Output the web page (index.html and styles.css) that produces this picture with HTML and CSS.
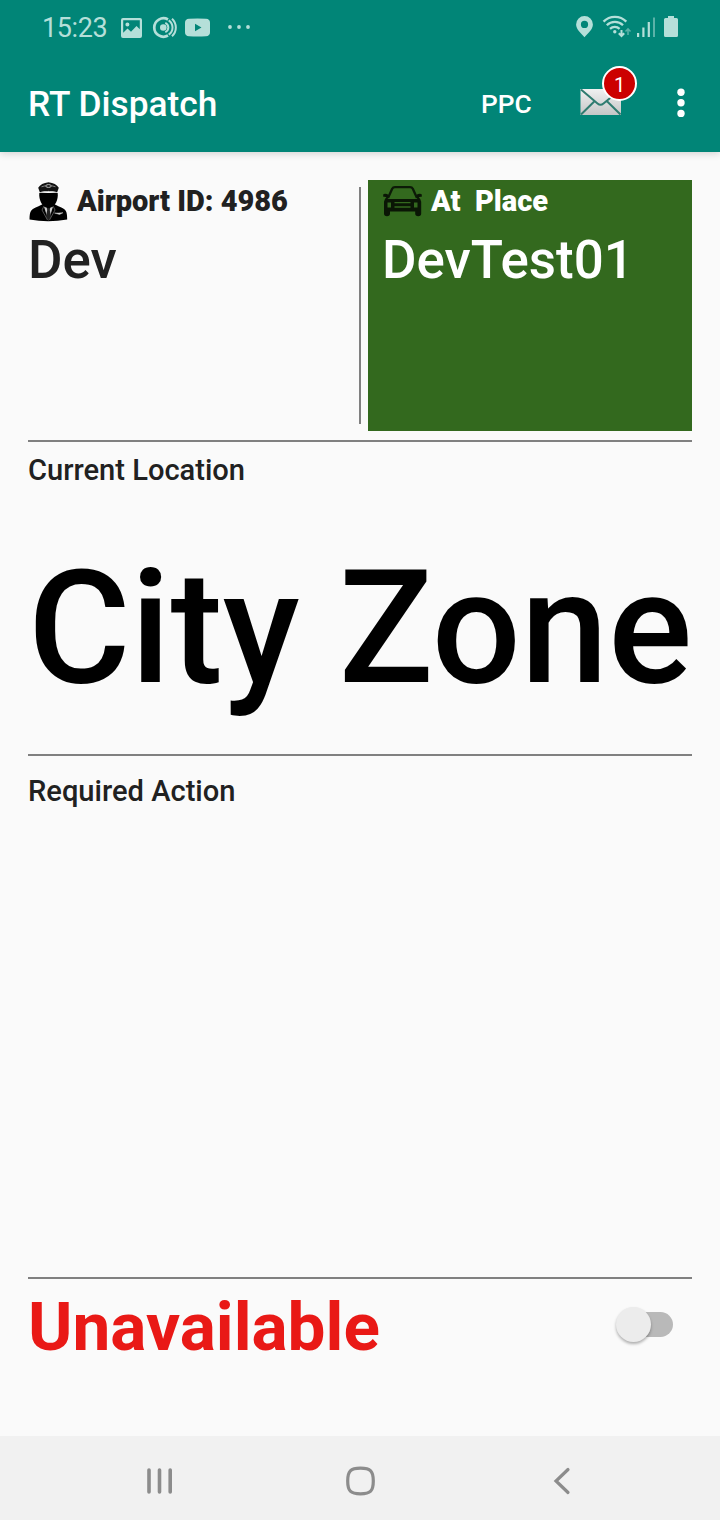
FILE: index.html
```html
<!DOCTYPE html>
<html lang="en">
<head>
<meta charset="utf-8">
<title>RT Dispatch</title>
<link rel="stylesheet" href="styles.css">
</head>
<body>
<div class="screen">
  <header class="header">
    <div class="status">
      <span class="clock">15:23</span>
      <svg class="status-left" width="132" height="24" viewBox="120 15 132 24" fill="#b5dfd9">
        <path fill-rule="evenodd" d="M123 18h17q2 0 2 2v16q0 2-2 2h-17q-2 0-2-2V20q0-2 2-2zm.2 2.200v12.600l4.300-4.300 3.500 3.200 5.500-5.700 3.300 3.300v-9.100zM125.400 24.500a2 2 0 1 0 4 0 2 2 0 1 0-4 0z"/>
        <g fill="none" stroke="#b5dfd9">
          <path d="M168 19.500A9.200 9.200 0 1 0 168 35.500" stroke-width="2.700"/>
          <path d="M165.300 22.900a5 5 0 0 1 0 9.200M168.700 20.300a8.700 8.700 0 0 1 0 14.400M172 18.700a12 12 0 0 1 0 17.600" stroke-width="2"/>
        </g>
        <circle cx="163.300" cy="27.500" r="3.300"/>
        <path fill-rule="evenodd" d="M189 18.800q8.500-.8 17 0 4 .3 4 4v9.400q0 3.700-4 4-8.500.8-17 0-4-.3-4-4v-9.400q0-3.700 4-4zM195 23.800v7.500l6.500-3.700z"/>
        <circle cx="230" cy="27" r="1.900"/><circle cx="239" cy="27" r="1.900"/><circle cx="248" cy="27" r="1.900"/>
      </svg>
      <svg class="status-right" width="104" height="26" viewBox="575 13 104 26" fill="#b5dfd9">
        <path fill-rule="evenodd" d="M584.500 16a8.400 8.400 0 0 1 8.400 8.400c0 5-5 8.600-8.400 12.800-3.400-4.200-8.400-7.800-8.400-12.800a8.400 8.400 0 0 1 8.400-8.400zm0 4.800a3.600 3.600 0 1 0 0 7.200 3.600 3.600 0 1 0 0-7.200z"/>
        <g fill="none" stroke="#b5dfd9" stroke-width="2.300">
          <path d="M603.500 21.600a16 16 0 0 1 22.800 0M606.800 25.200a11.500 11.500 0 0 1 16.200 0M610 28.800a7 7 0 0 1 9.600 0"/>
          <path d="M621.500 30v6M618.800 33.200l2.700 2.800 2.700-2.800" stroke-width="2"/>
          <path d="M628 35v-6M625.500 31.500l2.500-2.700 2.500 2.700" stroke-width="1.500" opacity=".5"/>
        </g>
        <circle cx="614.800" cy="31.700" r="1.700"/>
        <path d="M637 33h2.200v4H637zM642.300 27.500h2.200V37h-2.200zM647.700 22h2.200v15h-2.200z"/>
        <path d="M653 17.500h2V37h-2z" opacity=".5"/>
        <path d="M668 16h6v2h2.500q1.500 0 1.500 1.500v16q0 1.500-1.500 1.500h-11q-1.500 0-1.500-1.500v-16q0-1.500 1.500-1.500h2.500z"/>
      </svg>
    </div>
    <div class="appbar">
      <h1 class="title">RT Dispatch</h1>
      <span class="ppc">PPC</span>
      <div class="mail">
        <svg width="42" height="28" viewBox="0 0 42 28">
          <defs><linearGradient id="paper" x1="0" y1="0" x2="0" y2="1"><stop offset="0" stop-color="#f0f1f1"/><stop offset="1" stop-color="#c4c6c6"/></linearGradient></defs>
          <rect x=".5" y="1" width="40.500" height="26" fill="url(#paper)"/>
          <path d="M1 1.500 17.500 15.500q3 2.500 6 0L40.500 1.500M1 26.500l13.500-13.300M40.500 26.500l-13.500-13.300" fill="none" stroke="#2f7c70" stroke-width="2"/>
        </svg>
        <span class="badge">1</span>
      </div>
      <svg class="more" width="8" height="30" viewBox="0 0 8 30" fill="#fff"><circle cx="4" cy="4.200" r="3.700"/><circle cx="4" cy="14.800" r="3.700"/><circle cx="4" cy="25.400" r="3.700"/></svg>
    </div>
  </header>

  <main class="main">
    <section class="top">
      <div class="driver">
        <div class="caption">
          <svg width="41" height="42" viewBox="0 0 41 42">
            <path d="M1.500 39.500C1.500 31 3 29 10 26.500L15 24h11l5 2.500c7 2.500 8.200 4.500 8.200 13Q20 43 1.500 39.500z" fill="#000"/>
            <path d="M16 26.500h9l-1.500 5-3 9-3-9z" fill="#ccc"/>
            <path d="m18.800 28 1.700-1 1.700 1-.4 2 1.200 7-2.500 4-2.500-4 1.200-7z" fill="#222"/>
            <path d="m16 26-2 4 5.500 10M25 26l2 4-5.500 10" fill="none" stroke="#777" stroke-width=".7"/>
            <path d="M11.300 13h18.400c.8 6.500-2.500 13-6.700 14.500q-2.500 1-5 0C14 26 10.600 19.500 11.300 13z" fill="#000"/>
            <path d="M10.200 7.800Q13 3.200 20.500 2.300 28 3.200 30.800 7.800l-1.600 4.500q-8.700-2.500-17.400 0z" fill="#111"/>
            <path d="M11.800 12.600q8.700-2.400 17.400 0" fill="none" stroke="#bbb" stroke-width="1"/>
            <ellipse cx="20.500" cy="6" rx="2.800" ry="1.400" fill="none" stroke="#bbb" stroke-width="1"/>
            <path d="M13.500 6.800l4-1.100M23.500 5.700l4 1.100" stroke="#999" stroke-width=".8"/>
            <path d="M26.500 33h4l4.500-.3-3.500 1.800z" fill="#ddd" stroke="#bbb" stroke-width=".5"/>
          </svg>
          <span>Airport ID: 4986</span>
        </div>
        <div class="name">Dev</div>
      </div>
      <div class="vline"></div>
      <div class="vehicle">
        <div class="caption">
          <svg width="41" height="42" viewBox="0 0 41 42">
            <path d="M6 18 10.200 8.800Q11 7.200 13 7.200h15q2 0 2.800 1.600L35 18" fill="none" stroke="#0c1a07" stroke-width="2.300"/>
            <path fill="#0a1605" fill-rule="evenodd" d="M1.500 14q3-.8 4.800.8L5.800 19h29.400l-.5-4.200q1.800-1.600 4.800-.8l.5 2.500-3.300.8q2.500 2 2.500 4.500V33.500q0 2.700-3 2.700t-3-2.700V31.500H8v2q0 2.700-3 2.700t-3-2.700V21.800q0-2.500 2.500-4.500L1 16.500zM5.500 22.500v5h3.500v-5zM32 22.500v5h3.500v-5zM12.500 22v1.200h16V22zM12.500 26.200v1.600h16v-1.600z"/>
          </svg>
          <span class="state">At&nbsp; Place</span>
        </div>
        <div class="name">DevTest01</div>
      </div>
    </section>
    <section class="location">
      <h2 class="label">Current Location</h2>
      <div class="zone">City Zone</div>
    </section>
    <section class="action">
      <h2 class="label">Required Action</h2>
    </section>
    <section class="availability">
      <span class="unavailable">Unavailable</span>
      <div class="switch"><div class="thumb"></div></div>
    </section>
  </main>

  <nav class="nav">
    <svg width="28" height="28" viewBox="0 0 28 28"><path d="M4 3v22M14.500 3v22M25.200 3v22" fill="none" stroke="#8c8c8c" stroke-width="3.600" stroke-linecap="round"/></svg>
    <svg width="30" height="30" viewBox="0 0 30 30"><path d="M15.500 2.200c10 0 12.800 2.800 12.800 12.800s-2.800 12.800-12.800 12.800S2.700 25 2.700 15 5.500 2.200 15.500 2.200z" fill="none" stroke="#8c8c8c" stroke-width="3.200"/></svg>
    <svg width="18" height="28" viewBox="0 0 18 28"><path d="M15 2.500 3 14l12 11.500" fill="none" stroke="#8c8c8c" stroke-width="3.200" stroke-linecap="round"/></svg>
  </nav>
</div>
</body>
</html>
```

FILE: styles.css
```css
* { box-sizing: border-box; }
body { margin: 0; font-family: Roboto, sans-serif; background: #fafafa; color: #212121; }
h1, h2 { margin: 0; }
svg { display: block; flex: none; }
.screen { width: 720px; height: 1520px; display: flex; flex-direction: column; overflow: hidden; }

.header { height: 152px; background: #018577; box-shadow: 0 2px 7px rgba(0, 0, 0, .15); color: #fff; }
.status { height: 56px; display: flex; padding-left: 42px; }
.clock { width: 78px; font-size: 27px; letter-spacing: -.4px; line-height: 57px; color: #b5dfd9; }
.status-left { margin-top: 15px; }
.status-right { margin: 13px 0 0 323px; }
.appbar { height: 96px; display: flex; align-items: center; padding-left: 28px; }
.title { width: 453px; font-size: 35.300px; font-weight: 500; line-height: 96px; white-space: nowrap; }
.ppc { width: 99px; font-size: 26.300px; font-weight: 500; line-height: 94px; }
.mail { position: relative; width: 42px; height: 28px; margin-top: -4px; }
.badge { position: absolute; left: 22px; top: -22px; width: 35px; height: 35px; border: 2px solid #fff; border-radius: 50%; background: #cc0000; font-size: 20px; line-height: 34px; text-align: center; }
.more { margin: -2px 0 0 55px; }

.main { flex: 1; padding: 28px 28px 0; }
.top { height: 251px; display: flex; }
.driver { width: 331px; }
.vline { width: 2px; height: 237px; margin: 7px 7px 0 0; background: #808080; }
.vehicle { width: 324px; padding-left: 14px; background: #33691e; color: #fff; }
.caption { height: 42px; display: flex; gap: 8px; font-size: 29px; font-weight: 900; line-height: 43px; white-space: nowrap; }
.name { font-size: 52.900px; font-weight: 500; line-height: 77px; }
.location { height: 316px; margin-top: 9px; border-top: 2px solid #808080; border-bottom: 2px solid #808080; }
.label { font-size: 29.100px; font-weight: 500; line-height: 57px; }
.zone { font-size: 157px; font-weight: 500; line-height: 258px; color: #000; white-space: nowrap; }
.action { height: 523px; padding-top: 7px; border-bottom: 2px solid #808080; }
.availability { height: 94px; display: flex; justify-content: space-between; align-items: center; padding-right: 19px; }
.unavailable { font-size: 67.500px; font-weight: 700; line-height: 80px; padding-top: 1px; color: #e91916; }
.switch { position: relative; width: 58px; height: 25px; margin-top: -3px; padding-left: 16px; border-radius: 13px; background: #b9b9b9 content-box; }
.thumb { position: absolute; left: 1px; top: -5px; width: 35px; height: 35px; border-radius: 50%; background: #ececec; box-shadow: 0 2px 3px rgba(0, 0, 0, .3); }

.nav { height: 84px; background: #f1f1f1; display: grid; grid-template-columns: 200px 208px 18px; align-items: center; padding: 5px 0 0 145px; }
```
